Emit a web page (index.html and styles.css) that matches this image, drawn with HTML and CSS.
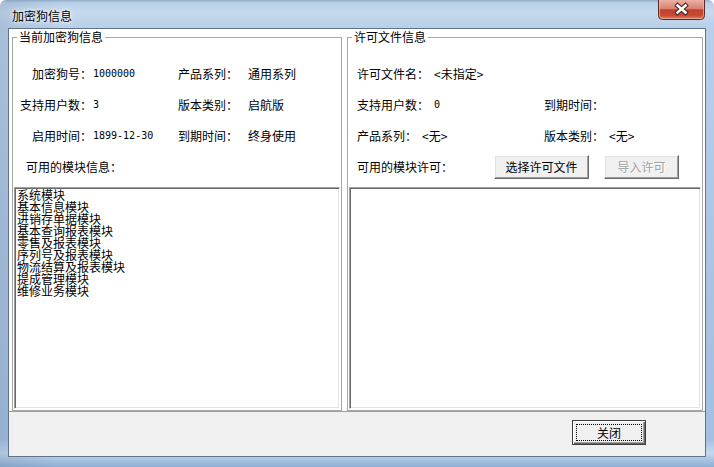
FILE: index.html
```html
<!DOCTYPE html>
<html lang="zh-CN">
<head>
<meta charset="utf-8">
<title>加密狗信息</title>
<link rel="stylesheet" href="styles.css">
</head>
<body>
<div class="window">
  <div class="titlebar">
    <span class="title">加密狗信息</span>
    <button class="close-btn" aria-label="关闭">
      <svg width="47" height="20" viewBox="0 0 47 20">
        <defs>
          <linearGradient id="red" x1="0" y1="0" x2="0" y2="1">
            <stop offset="0" stop-color="#eab1a4"/>
            <stop offset="0.45" stop-color="#d8806f"/>
            <stop offset="0.5" stop-color="#c4412c"/>
            <stop offset="0.8" stop-color="#c84a33"/>
            <stop offset="1" stop-color="#e2906f"/>
          </linearGradient>
        </defs>
        <path d="M0.5 0 V15.5 Q0.5 19.5 4.5 19.5 H42.5 Q46.5 19.5 46.5 15.5 V0" fill="url(#red)" stroke="#5b2a26"/>
        <path d="M1.5 0 V15 Q1.5 18.5 5 18.5 H42 Q45.5 18.5 45.5 15 V0" fill="none" stroke="#f1c0b3" stroke-opacity="0.6"/>
        <path d="M19.5 5.5 L27.5 12.5 M27.5 5.5 L19.5 12.5" stroke="#4a2320" stroke-width="4.6" stroke-linecap="square"/>
        <path d="M19.5 5.5 L27.5 12.5 M27.5 5.5 L19.5 12.5" stroke="#ffffff" stroke-width="2.6" stroke-linecap="square"/>
      </svg>
    </button>
  </div>
  <div class="client">
    <div class="groups">
      <fieldset class="group group-left">
        <legend>当前加密狗信息</legend>
        <div class="dongle-info">
          <span class="lbl-a">加密狗号：</span><span class="val-a num">1000000</span>
          <span class="lbl-b">产品系列：</span><span class="val-b">通用系列</span>
          <span class="lbl-a">支持用户数：</span><span class="val-a num">3</span>
          <span class="lbl-b">版本类别：</span><span class="val-b">启航版</span>
          <span class="lbl-a">启用时间：</span><span class="val-a num">1899-12-30</span>
          <span class="lbl-b">到期时间：</span><span class="val-b">终身使用</span>
          <span class="lbl-wide">可用的模块信息：</span>
        </div>
        <div class="listbox">
          <div>系统模块</div>
          <div>基本信息模块</div>
          <div>进销存单据模块</div>
          <div>基本查询报表模块</div>
          <div>零售及报表模块</div>
          <div>序列号及报表模块</div>
          <div>物流结算及报表模块</div>
          <div>提成管理模块</div>
          <div>维修业务模块</div>
        </div>
      </fieldset>
      <fieldset class="group group-right">
        <legend>许可文件信息</legend>
        <div class="license-info">
          <div class="row">
            <div class="cell"><span class="lbl">许可文件名：</span><span>&lt;未指定&gt;</span></div>
          </div>
          <div class="row">
            <div class="cell"><span class="lbl">支持用户数：</span><span class="num">0</span></div>
            <div class="cell"><span class="lbl">到期时间：</span><span></span></div>
          </div>
          <div class="row">
            <div class="cell"><span class="lbl">产品系列：</span><span>&lt;无&gt;</span></div>
            <div class="cell"><span class="lbl">版本类别：</span><span>&lt;无&gt;</span></div>
          </div>
          <div class="row">
            <span class="lbl-modules">可用的模块许可：</span>
            <button class="btn btn-select">选择许可文件</button>
            <button class="btn btn-import" disabled>导入许可</button>
          </div>
        </div>
        <div class="listbox"></div>
      </fieldset>
    </div>
    <div class="footer">
      <button class="btn btn-default">关闭</button>
    </div>
  </div>
</div>
</body>
</html>
```
FILE: styles.css
```css
html, body {
  margin: 0;
  padding: 0;
}

body {
  width: 714px;
  height: 467px;
  overflow: hidden;
  font-family: "Noto Sans CJK SC", "Noto Sans", sans-serif;
  font-size: 12px;
  color: #000;
}

.window {
  height: 467px;
  box-sizing: border-box;
  display: flex;
  flex-direction: column;
  padding: 0 8px 10px 8px;
  background:
    linear-gradient(90deg, rgba(90, 110, 140, 0.18) 0, rgba(255, 255, 255, 0) 60px),
    linear-gradient(180deg, #94adc9 0, #b9d0e8 3px, #c6daee 12px, #b9d0e9 27px, #a9c4e1 60%, #a3c0df 94%, #c4d9ee 97%, #8eaed2 100%);
  border-radius: 6px 6px 0 0;
}

.titlebar {
  height: 28px;
  display: flex;
  align-items: flex-start;
  justify-content: space-between;
}

.title {
  margin: 8px 0 0 4px;
  line-height: 16px;
  font-size: 12px;
  text-shadow: 0 0 6px #fff, 0 0 3px #fff;
}

.close-btn {
  width: 47px;
  height: 20px;
  margin: 0 1px 0 0;
  padding: 0;
  border: 0;
  background: none;
  display: block;
}

.close-btn svg {
  display: block;
}

.client {
  flex: 1;
  display: flex;
  flex-direction: column;
  border: 1px solid #5f748c;
  background: #fff;
}

.groups {
  height: 382px;
  box-sizing: border-box;
  display: flex;
  gap: 5px;
  padding: 1px 2px 0 3px;
}

.group {
  margin: 0;
  padding: 0 1px 1px 1px;
  border: 1px solid #a7a7a7;
  min-width: 0;
  display: flex;
  flex-direction: column;
}

.group-left {
  width: 330px;
  box-sizing: border-box;
  flex-shrink: 0;
}

.group-right {
  flex: 1;
}

.group legend {
  margin-left: 3px;
  padding: 0 2px;
  line-height: 14px;
  font-size: 12px;
}

.num {
  font-family: "DejaVu Sans Mono", "Liberation Mono", monospace;
  font-size: 10px;
}

.dongle-info {
  display: grid;
  grid-template-columns: 79px 85px 70px 1fr;
  grid-auto-rows: 31px;
  align-items: center;
  padding-top: 14px;
  white-space: nowrap;
}

.lbl-a {
  text-align: right;
  padding-right: 1px;
}

.lbl-wide {
  grid-column: 1 / -1;
  padding-left: 12px;
}

.license-info {
  display: flex;
  flex-direction: column;
  padding-top: 14px;
  white-space: nowrap;
}

.row {
  height: 31px;
  display: flex;
  align-items: center;
  padding-left: 8px;
}

.cell {
  width: 187px;
  flex-shrink: 0;
  display: flex;
  align-items: center;
}

.lbl {
  margin-right: 5px;
}

.lbl-modules {
  width: 137px;
  flex-shrink: 0;
}

.listbox {
  flex: 1;
  margin-top: 5px;
  border: 1px solid;
  border-color: #a0a0a0 #ffffff #ffffff #a0a0a0;
  box-shadow: inset 1px 1px 0 #696969, inset -1px -1px 0 #e3e3e3;
  line-height: 12px;
  font-size: 12px;
  padding-top: 1px;
  padding-left: 2px;
  white-space: nowrap;
}

.btn {
  font-family: inherit;
  font-size: 12px;
  color: #000;
  background: #f0f0f0;
  margin: 0;
  padding: 0;
  height: 24px;
  flex-shrink: 0;
  border: 1px solid;
  border-color: #ffffff #696969 #696969 #ffffff;
  box-shadow: inset -1px -1px 0 #a0a0a0, inset 1px 1px 0 #e3e3e3;
  line-height: 20px;
}

.btn-select {
  width: 95px;
}

.btn-import {
  width: 75px;
  margin-left: 15px;
  color: #a0a0a0;
  text-shadow: 1px 1px 0 #fff;
}

.footer {
  height: 45px;
  box-sizing: border-box;
  border-top: 1px solid #a0a0a0;
  background: #f0f0f0;
  display: flex;
  justify-content: flex-end;
  align-items: flex-start;
  padding: 8px 59px 0 0;
}

.btn-default {
  width: 74px;
  height: 25px;
  border: 1px solid #3c3c3c;
  box-shadow: inset 1px 1px 0 #ffffff, inset -1px -1px 0 #696969, inset -2px -2px 0 #a0a0a0;
  outline: 1px dotted #000;
  outline-offset: -5px;
}
```
